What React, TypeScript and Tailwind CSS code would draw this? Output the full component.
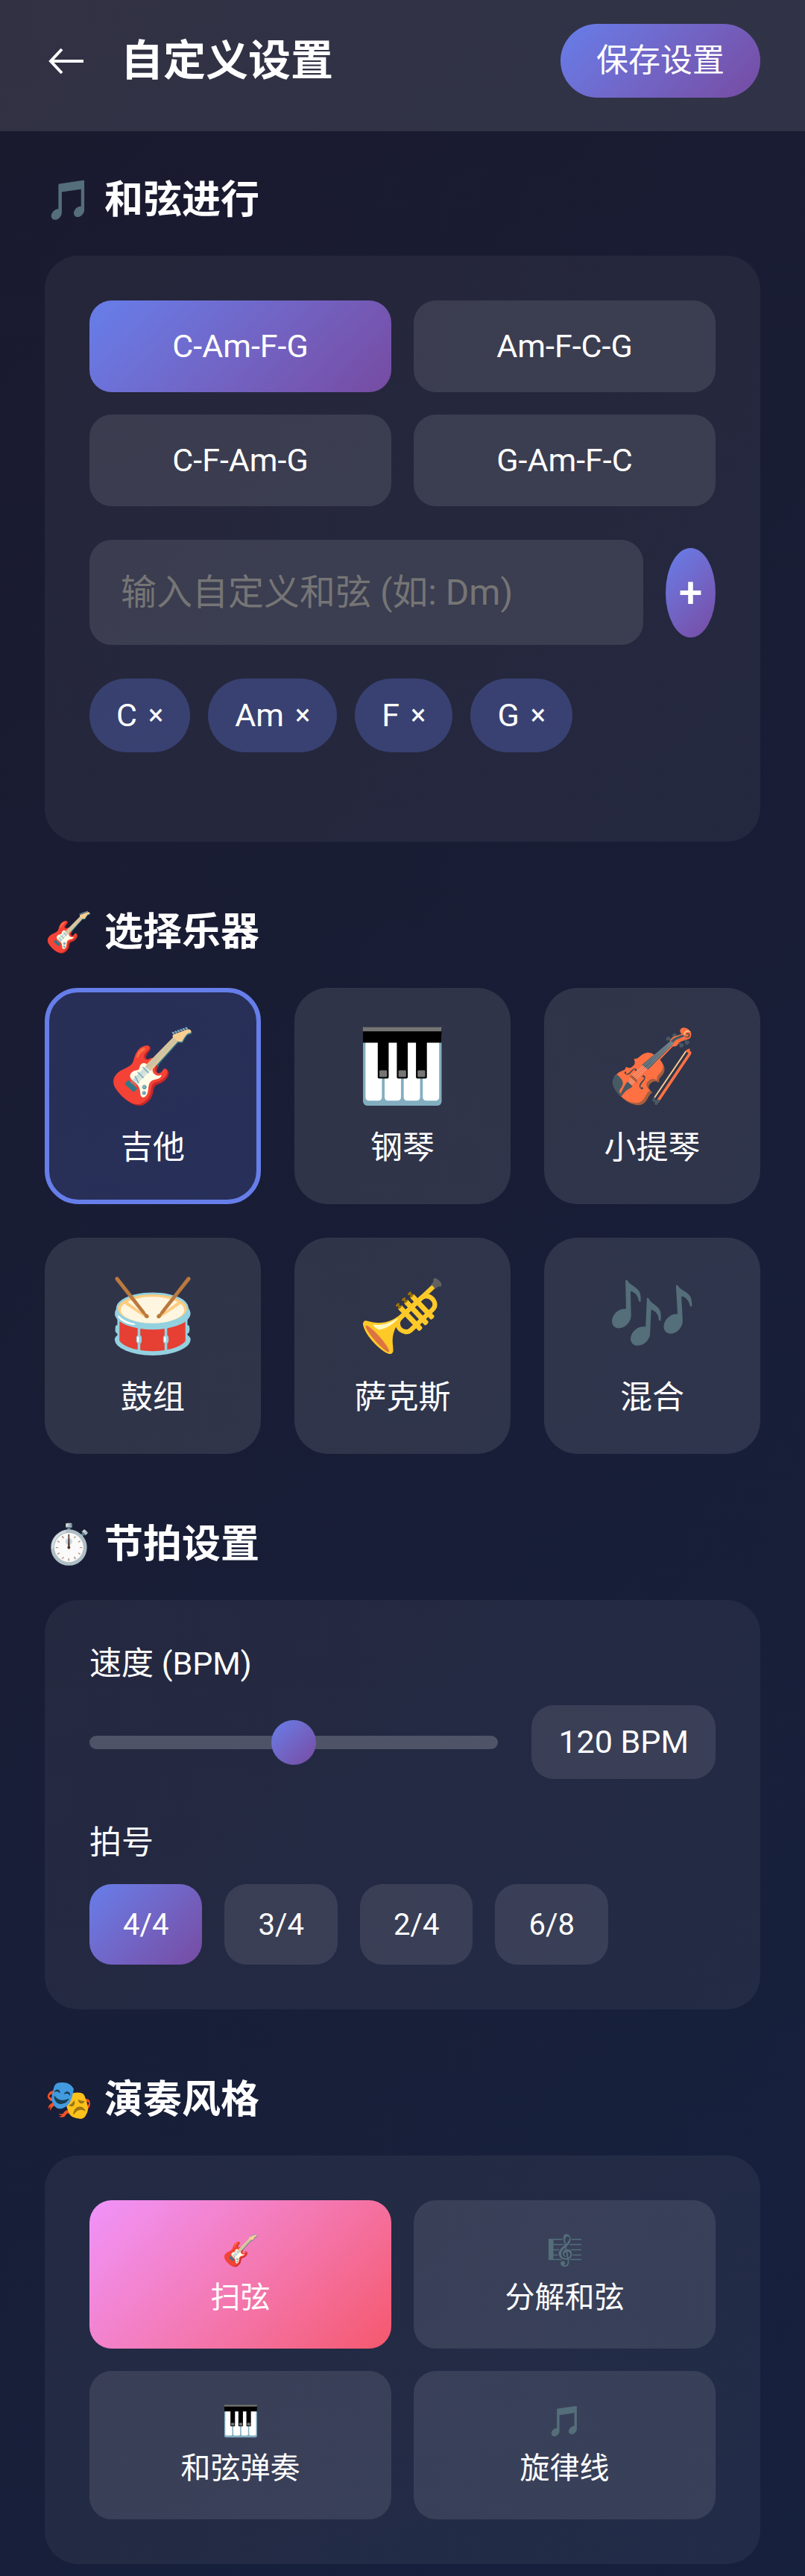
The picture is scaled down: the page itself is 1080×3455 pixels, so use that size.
import React, { useState } from "react";

const progressions = ["C-Am-F-G", "Am-F-C-G", "C-F-Am-G", "G-Am-F-C"];
const instruments = [
  ["🎸", "吉他"],
  ["🎹", "钢琴"],
  ["🎻", "小提琴"],
  ["🥁", "鼓组"],
  ["🎺", "萨克斯"],
  ["🎶", "混合"],
];
const meters = ["4/4", "3/4", "2/4", "6/8"];
const styles = [
  ["🎸", "扫弦"],
  ["🎼", "分解和弦"],
  ["🎹", "和弦弹奏"],
  ["🎵", "旋律线"],
];

const idle = "bg-white/10";
const active = "bg-linear-135 from-[#667eea] to-[#764ba2]";

function Section({ icon, title, children }: { icon: string; title: string; children: React.ReactNode }) {
  return (
    <section className="mb-[84px] last:mb-0">
      <h2 className="mb-9 flex h-[76px] items-center gap-[14px] text-[52px] font-bold leading-[76px]">
        <span className="w-[66px]">{icon}</span>
        {title}
      </h2>
      {children}
    </section>
  );
}

export default function App() {
  const [prog, setProg] = useState(progressions[0]);
  const [chords, setChords] = useState(["C", "Am", "F", "G"]);
  const [draft, setDraft] = useState("");
  const [inst, setInst] = useState("吉他");
  const [bpm, setBpm] = useState(120);
  const [meter, setMeter] = useState("4/4");
  const [style, setStyle] = useState("扫弦");

  return (
    <div className="min-h-screen bg-linear-135 from-[#1a1a2e] to-[#16213e] pb-[15px] font-[Roboto,'Noto_Sans_CJK_SC',sans-serif] text-[43px] leading-[63px] text-white">
      <header className="flex items-start justify-between bg-white/10 px-[60px] pt-8 pb-[45px]">
        <div className="flex h-[99px] items-center gap-[45px]">
          <button aria-label="返回" className="flex w-[57px] justify-center">
            <svg viewBox="0 0 48 36" className="h-9 w-12" fill="none" stroke="currentColor" strokeWidth="4" aria-hidden="true">
              <path d="M47 18H3M18 2L3 18L18 34" />
            </svg>
          </button>
          <h1 className="text-[57px] font-bold">自定义设置</h1>
        </div>
        <button className={"h-[99px] rounded-[50px] px-12 " + active}>保存设置</button>
      </header>
      <main className="px-[60px] pt-[55px]">
        <Section icon="🎵" title="和弦进行">
          <div className="rounded-[45px] bg-white/5 p-[60px]">
            <div className="grid grid-cols-2 gap-[30px]">
              {progressions.map((p) => (
                <button key={p} onClick={() => setProg(p)} className={"h-[123px] rounded-[30px] " + (p === prog ? active : idle)}>
                  {p}
                </button>
              ))}
            </div>
            <div className="my-[45px] flex items-center gap-[30px]">
              <input
                aria-label="自定义和弦"
                value={draft}
                onChange={(e) => setDraft(e.target.value)}
                placeholder="输入自定义和弦 (如: Dm)"
                className="h-[141px] min-w-0 flex-1 rounded-[30px] bg-white/10 px-[42px] text-[48px] placeholder:text-[#757575]"
              />
              <button
                aria-label="添加和弦"
                onClick={() => draft && (setChords([...chords, draft]), setDraft(""))}
                className={"h-[120px] w-[67px] rounded-[50%] text-[57px] font-medium " + active}
              >
                +
              </button>
            </div>
            <div className="flex min-h-[159px] flex-wrap content-start gap-6">
              {chords.map((c, i) => (
                <button
                  key={i}
                  onClick={() => setChords(chords.filter((_, j) => j !== i))}
                  className="flex h-[99px] items-center gap-[15px] rounded-[50px] bg-[#667eea]/30 px-9"
                >
                  <span>{c}</span>
                  <span className="text-[38px]">×</span>
                </button>
              ))}
            </div>
          </div>
        </Section>
        <Section icon="🎸" title="选择乐器">
          <div className="grid grid-cols-3 gap-[45px]">
            {instruments.map(([icon, name]) => (
              <button
                key={name}
                onClick={() => setInst(name)}
                className={
                  "flex aspect-square flex-col items-center justify-center gap-[18px] rounded-[45px] border-[6px] " +
                  (inst === name ? "border-[#667eea] bg-[#667eea]/20" : "border-transparent bg-white/10")
                }
              >
                <span className="text-[96px] leading-[120px]">{icon}</span>
                <span>{name}</span>
              </button>
            ))}
          </div>
        </Section>
        <Section icon="⏱️" title="节拍设置">
          <div className="rounded-[45px] bg-white/5 px-[60px] pt-[54px] pb-[60px]">
            <label htmlFor="bpm" className="mb-6 block">
              速度 (BPM)
            </label>
            <div className="mb-[54px] flex items-center gap-[45px]">
              <input
                id="bpm"
                type="range"
                min={60}
                max={180}
                value={bpm}
                onChange={(e) => setBpm(+e.target.value)}
                className="h-[18px] min-w-0 flex-1 appearance-none rounded-[9px] bg-white/20 [&::-webkit-slider-thumb]:size-[60px] [&::-webkit-slider-thumb]:appearance-none [&::-webkit-slider-thumb]:rounded-full [&::-webkit-slider-thumb]:bg-linear-135 [&::-webkit-slider-thumb]:from-[#667eea] [&::-webkit-slider-thumb]:to-[#764ba2]"
              />
              <output htmlFor="bpm" className="rounded-[30px] bg-white/10 px-9 py-[18px]">
                {bpm} BPM
              </output>
            </div>
            <div id="meter" className="mb-6">
              拍号
            </div>
            <div role="group" aria-labelledby="meter" className="flex gap-[30px]">
              {meters.map((m) => (
                <button
                  key={m}
                  onClick={() => setMeter(m)}
                  className={"h-[108px] rounded-[30px] px-[45px] text-[40px] " + (m === meter ? active : idle)}
                >
                  {m}
                </button>
              ))}
            </div>
          </div>
        </Section>
        <Section icon="🎭" title="演奏风格">
          <div className="grid grid-cols-2 gap-[30px] rounded-[45px] bg-white/5 p-[60px]">
            {styles.map(([icon, name]) => (
              <button
                key={name}
                onClick={() => setStyle(name)}
                className={
                  "flex h-[199px] flex-col items-center justify-center gap-[3px] rounded-[30px] text-[40px] leading-[60px] " +
                  (style === name ? "bg-linear-135 from-[#f093fb] to-[#f5576c]" : idle)
                }
              >
                <span>{icon}</span>
                <span>{name}</span>
              </button>
            ))}
          </div>
        </Section>
      </main>
    </div>
  );
}
